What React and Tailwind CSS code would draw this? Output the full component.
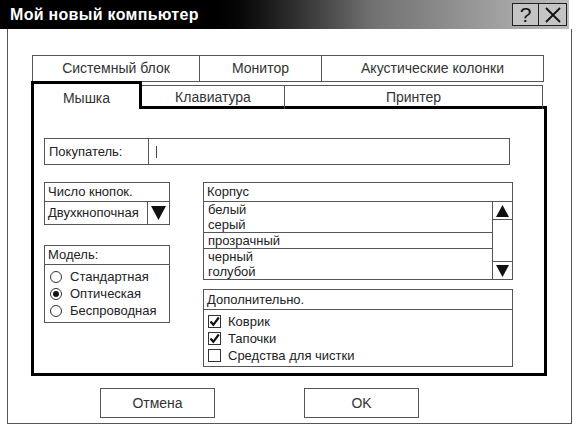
export default function App() {
  const radios = [
    { label: 'Стандартная', on: false },
    { label: 'Оптическая', on: true },
    { label: 'Беспроводная', on: false },
  ];
  const extras = [
    { label: 'Коврик', on: true },
    { label: 'Тапочки', on: true },
    { label: 'Средства для чистки', on: false },
  ];

  return (
    <div className="w-[576px] h-[427px] bg-white overflow-hidden font-['Liberation_Sans',Arial,sans-serif] text-[#222]">
      {/* title bar */}
      <div className="w-[569px] h-[29px] flex items-center bg-linear-to-r from-black from-35% via-[#707070] via-65% to-[#bcbcbc]">
        <div className="pl-[10px] text-white text-[16px] font-bold tracking-[0.3px]">Мой новый компьютер</div>
        <div className="ml-auto mr-[2px] flex h-[23px] border border-[#222] bg-[#c4c4c4]">
          <div className="w-[26px] flex items-center justify-center border-r border-[#222] text-[21px] leading-none text-[#111]">?</div>
          <div className="w-[27px] flex items-center justify-center">
            <svg width="18" height="18" viewBox="0 0 18 18">
              <path d="M2 2 L16 16 M16 2 L2 16" stroke="#111" strokeWidth="1.8" />
            </svg>
          </div>
        </div>
      </div>

      {/* window frame */}
      <div className="ml-[7px] w-[565px] h-[395px] border-x border-b border-[#555] pl-[23px] pt-[26px]">
        {/* back tab row */}
        <div className="ml-[1px] w-[512px] h-[27px] flex border border-[#555] text-[14px] text-[#333]">
          <div className="w-[167px] flex items-center justify-center border-r border-[#555]">Системный блок</div>
          <div className="w-[122px] flex items-center justify-center border-r border-[#555]">Монитор</div>
          <div className="flex-1 flex items-center justify-center">Акустические колонки</div>
        </div>

        {/* front tab row */}
        <div className="flex items-end -mb-[3px] -mt-px text-[14px] text-[#333]">
          <div className="relative z-10 w-[111px] h-[28px] border-[3px] border-b-0 border-black bg-white flex justify-center pt-[4px]">Мышка</div>
          <div className="w-[143px] h-[24px] border-t border-r border-[#555] flex items-center justify-center">Клавиатура</div>
          <div className="w-[258px] h-[24px] border-t border-r border-[#555] flex items-center justify-center">Принтер</div>
        </div>

        {/* panel */}
        <div className="w-[516px] h-[270px] border-[3px] border-black pl-[10px] pt-[29px] text-[13px]">
          <div className="w-[466px] h-[27px] flex border border-[#555]">
            <div className="w-[104px] flex items-center pl-[4px] border-r border-[#555]">Покупатель:</div>
            <div className="flex items-center pl-[7px]">
              <div className="w-px h-[12px] bg-[#444]" />
            </div>
          </div>

          <div className="flex gap-[33px] mt-[17px]">
            {/* left column */}
            <div className="w-[126px] flex flex-col gap-[20px]">
              <div className="border border-[#555]">
                <div className="h-[19px] flex items-center pl-[3px] border-b border-[#555]">Число кнопок.</div>
                <div className="h-[22px] flex">
                  <div className="flex-1 flex items-center pl-[3px] border-r border-[#555]">Двухкнопочная</div>
                  <div className="w-[21px] flex items-center justify-center">
                    <svg width="15" height="14" viewBox="0 0 15 14">
                      <path d="M0 0 H15 L7.5 14 Z" fill="#111" />
                    </svg>
                  </div>
                </div>
              </div>

              <div className="border border-[#555]">
                <div className="h-[19px] flex items-center pl-[3px] border-b border-[#555]">Модель:</div>
                <div className="pt-[3px] pb-[3px]">
                  {radios.map((r) => (
                    <div key={r.label} className="h-[17px] flex items-center pl-[5px]">
                      <div className="w-[12px] h-[12px] rounded-full border border-[#333] flex items-center justify-center">
                        {r.on && <div className="w-[6px] h-[6px] rounded-full bg-[#111]" />}
                      </div>
                      <span className="ml-[8px]">{r.label}</span>
                    </div>
                  ))}
                </div>
              </div>
            </div>

            {/* right column */}
            <div className="w-[310px] flex flex-col gap-[9px]">
              <div className="border border-[#555]">
                <div className="h-[19px] flex items-center pl-[3px] border-b border-[#555]">Корпус</div>
                <div className="h-[77px] flex">
                  <div className="flex-1 border-r border-[#555] leading-[15px]">
                    <div className="pl-[4px] h-[15px]">белый</div>
                    <div className="pl-[4px] h-[15px]">серый</div>
                    <div className="pl-[4px] h-[17px] border-y border-[#555]">прозрачный</div>
                    <div className="pl-[4px] h-[15px]">черный</div>
                    <div className="pl-[4px] h-[15px]">голубой</div>
                  </div>
                  <div className="w-[19px] flex flex-col justify-between">
                    <div className="h-[18px] border-b border-[#555] flex items-center justify-center">
                      <svg width="13" height="12" viewBox="0 0 13 12">
                        <path d="M6.5 0 L13 12 H0 Z" fill="#111" />
                      </svg>
                    </div>
                    <div className="h-[18px] border-t border-[#555] flex items-center justify-center">
                      <svg width="13" height="12" viewBox="0 0 13 12">
                        <path d="M0 0 H13 L6.5 12 Z" fill="#111" />
                      </svg>
                    </div>
                  </div>
                </div>
              </div>

              <div className="border border-[#555]">
                <div className="h-[20px] flex items-center pl-[3px] border-b border-[#555]">Дополнительно.</div>
                <div className="pt-[3px] pb-[2px]">
                  {extras.map((c) => (
                    <div key={c.label} className="h-[17px] flex items-center pl-[4px]">
                      <div className="w-[13px] h-[13px] border border-[#333] flex items-center justify-center">
                        {c.on && (
                          <svg width="11" height="11" viewBox="0 0 11 11">
                            <path d="M1.5 5.5 L4.3 8.8 L9.8 1.5" stroke="#111" strokeWidth="2.2" fill="none" />
                          </svg>
                        )}
                      </div>
                      <span className="ml-[7px]">{c.label}</span>
                    </div>
                  ))}
                </div>
              </div>
            </div>
          </div>
        </div>

        {/* buttons */}
        <div className="flex mt-[12px] pl-[69px] gap-[89px] text-[14px] text-[#333]">
          <div className="w-[115px] h-[30px] border border-[#555] flex items-center justify-center">Отмена</div>
          <div className="w-[115px] h-[30px] border border-[#555] flex items-center justify-center">OK</div>
        </div>
      </div>
    </div>
  );
}
